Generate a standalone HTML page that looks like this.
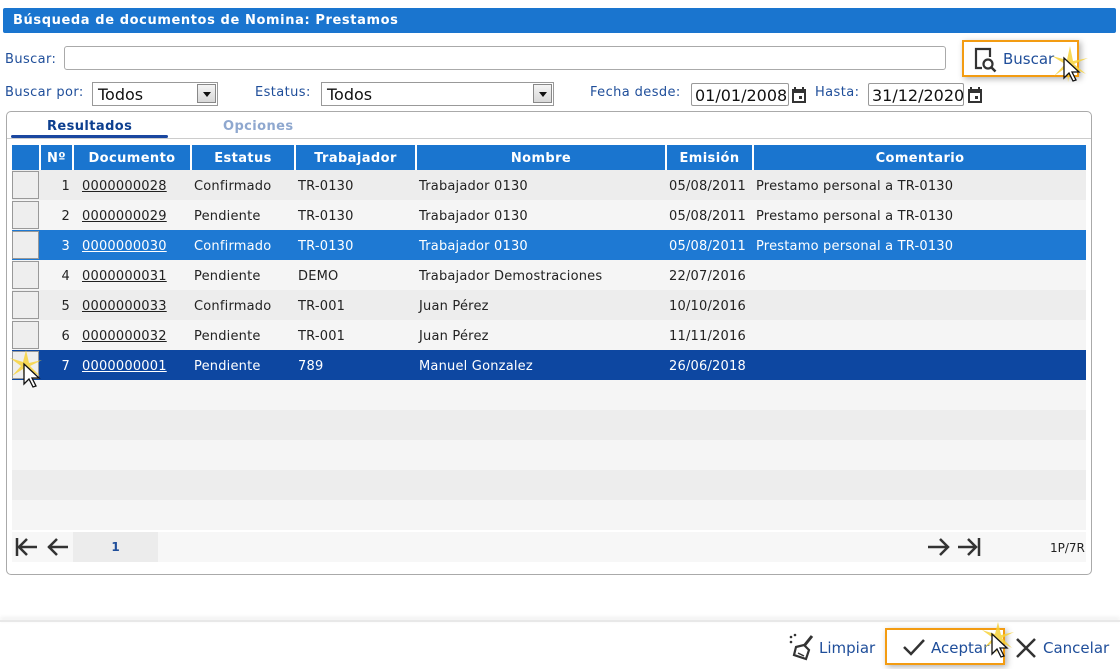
<!DOCTYPE html>
<html><head><meta charset="utf-8"><style>
*{box-sizing:border-box;margin:0;padding:0}
body{width:1120px;height:669px;background:#fff;font-family:"DejaVu Sans",Verdana,sans-serif;font-size:13px;color:#222;position:relative;overflow:hidden}
.abs{position:absolute}
.title{left:3px;top:8px;width:1113px;height:25px;background:#1a75cf;border-radius:2px;color:#fff;font-weight:bold;font-size:13px;padding:5px 10px;letter-spacing:0.6px}
.lbl{color:#1f4e9a;font-size:13px;letter-spacing:0.4px}
.inp{border:1px solid #aaa;border-radius:3px;background:#fff}
.sel{border:1px solid #999;background:#fff;font-size:16px;padding:2px 5px;color:#111}
.arr{position:absolute;right:1px;top:1px;width:19px;height:19px;background:linear-gradient(#f4f4f4,#d8d8d8);border:1px solid #888}
.arr:after{content:"";position:absolute;left:5px;top:7px;border-left:4px solid transparent;border-right:4px solid transparent;border-top:5px solid #111}
.date{border:1px solid #999;border-radius:2px;font-size:16px;padding:2px 3px;overflow:hidden;white-space:nowrap;color:#111}
table{border-collapse:collapse;position:absolute;left:12px;top:145px;width:1074px;table-layout:fixed}
th{background:#1a75cf;color:#fff;font-weight:bold;height:25px;border-right:2px solid #fff;font-size:13px;padding-top:2px;letter-spacing:0.4px}
td{height:30px;white-space:nowrap;padding:3px 3px 0;font-size:13px;letter-spacing:0.2px}
tr.a td{background:#ededed}tr.b td{background:#f5f5f5}
tr.s1 td{background:#1e79d3;color:#fff}tr.s2 td{background:#0d47a1;color:#fff}
td u{text-decoration:underline}
.cb{width:27px;height:28px;border:1px solid #999;background:#eee;margin-left:-3px;margin-top:-3px}
.btn{color:#1f4e9a;font-size:15px}
</style></head><body>
<div class="abs title">Búsqueda de documentos de Nomina: Prestamos</div>
<div class="abs lbl" style="left:5px;top:52px">Buscar:</div>
<div class="abs inp" style="left:64px;top:46px;width:882px;height:24px"></div>
<div class="abs" style="left:962px;top:40px;width:117px;height:37px;border:2px solid #f39c12;box-shadow:2px 2px 6px rgba(0,0,0,.3)"></div>
<svg class="abs" style="left:972px;top:45px" width="28" height="28" viewBox="0 0 28 28"><path d="M10 23H4V4h14v8" fill="none" stroke="#333" stroke-width="2.2"/><circle cx="16" cy="19" r="4.5" fill="none" stroke="#333" stroke-width="2.2"/><path d="M19.5 22.5l4 4" stroke="#333" stroke-width="2.5"/></svg>
<div class="abs btn" style="left:1003px;top:50px">Buscar</div>
<svg class="abs" style="left:1050px;top:44px" width="40" height="40" viewBox="0 0 40 40"><path d="M20 2L23 17 38 14 24 20 36 30 21 23 18 38 17 23 4 32 15 20 2 12 17 16Z" fill="#f7d23a" opacity=".85"/><path d="M14 14v20l5-5 4 8 3-1-4-8h7z" fill="#fff" stroke="#111" stroke-width="1.3"/></svg>
<div class="abs lbl" style="left:5px;top:85px">Buscar por:</div>
<div class="abs sel" style="left:92px;top:82px;width:126px;height:24px">Todos<div class="arr"></div></div>
<div class="abs lbl" style="left:255px;top:85px">Estatus:</div>
<div class="abs sel" style="left:321px;top:82px;width:233px;height:24px">Todos<div class="arr"></div></div>
<div class="abs lbl" style="left:590px;top:85px">Fecha desde:</div>
<div class="abs date" style="left:691px;top:83px;width:98px;height:23px">01/01/2008</div>
<svg class="abs" style="left:791px;top:86px" width="16" height="18" viewBox="0 0 16 18"><rect x="1" y="3" width="14" height="14" fill="#333"/><rect x="3" y="7" width="10" height="8" fill="#fff"/><rect x="8" y="10" width="3" height="3" fill="#333"/><rect x="3" y="1" width="2" height="3" fill="#333"/><rect x="11" y="1" width="2" height="3" fill="#333"/></svg>
<div class="abs lbl" style="left:815px;top:85px">Hasta:</div>
<div class="abs date" style="left:868px;top:83px;width:96px;height:23px">31/12/2020</div>
<svg class="abs" style="left:967px;top:86px" width="16" height="18" viewBox="0 0 16 18"><rect x="1" y="3" width="14" height="14" fill="#333"/><rect x="3" y="7" width="10" height="8" fill="#fff"/><rect x="8" y="10" width="3" height="3" fill="#333"/><rect x="3" y="1" width="2" height="3" fill="#333"/><rect x="11" y="1" width="2" height="3" fill="#333"/></svg>
<div class="abs" style="left:6px;top:111px;width:1086px;height:464px;border:1px solid #aaa;border-radius:5px"></div>
<div class="abs" style="left:7px;top:138px;width:1084px;height:1px;background:#ccc"></div>
<div class="abs" style="left:47px;top:119px;color:#0d3f8f;font-weight:bold;letter-spacing:0.4px">Resultados</div>
<div class="abs" style="left:11px;top:135px;width:157px;height:3px;background:#1a47a0;border-radius:2px"></div>
<div class="abs" style="left:223px;top:119px;color:#8fa8cf;font-weight:bold;letter-spacing:0.4px">Opciones</div>
<table>
<colgroup><col style="width:28px"><col style="width:33px"><col style="width:118px"><col style="width:104px"><col style="width:121px"><col style="width:250px"><col style="width:87px"><col></colgroup>
<tr><th></th><th>Nº</th><th>Documento</th><th>Estatus</th><th>Trabajador</th><th>Nombre</th><th>Emisión</th><th style="border-right:0">Comentario</th></tr>
<tr class="a"><td><div class="cb"></div></td><td style="text-align:right">1</td><td style="padding-left:9px"><u>0000000028</u></td><td>Confirmado</td><td>TR-0130</td><td>Trabajador 0130</td><td>05/08/2011</td><td>Prestamo personal a TR-0130</td></tr>
<tr class="b"><td><div class="cb"></div></td><td style="text-align:right">2</td><td style="padding-left:9px"><u>0000000029</u></td><td>Pendiente</td><td>TR-0130</td><td>Trabajador 0130</td><td>05/08/2011</td><td>Prestamo personal a TR-0130</td></tr>
<tr class="s1"><td><div class="cb"></div></td><td style="text-align:right">3</td><td style="padding-left:9px"><u>0000000030</u></td><td>Confirmado</td><td>TR-0130</td><td>Trabajador 0130</td><td>05/08/2011</td><td>Prestamo personal a TR-0130</td></tr>
<tr class="b"><td><div class="cb"></div></td><td style="text-align:right">4</td><td style="padding-left:9px"><u>0000000031</u></td><td>Pendiente</td><td>DEMO</td><td>Trabajador Demostraciones</td><td>22/07/2016</td><td></td></tr>
<tr class="a"><td><div class="cb"></div></td><td style="text-align:right">5</td><td style="padding-left:9px"><u>0000000033</u></td><td>Confirmado</td><td>TR-001</td><td>Juan Pérez</td><td>10/10/2016</td><td></td></tr>
<tr class="b"><td><div class="cb"></div></td><td style="text-align:right">6</td><td style="padding-left:9px"><u>0000000032</u></td><td>Pendiente</td><td>TR-001</td><td>Juan Pérez</td><td>11/11/2016</td><td></td></tr>
<tr class="s2"><td><div class="cb"></div></td><td style="text-align:right">7</td><td style="padding-left:9px"><u>0000000001</u></td><td>Pendiente</td><td>789</td><td>Manuel Gonzalez</td><td>26/06/2018</td><td></td></tr>
<tr class="b"><td colspan="8"></td></tr>
<tr class="a"><td colspan="8"></td></tr>
<tr class="b"><td colspan="8"></td></tr>
<tr class="a"><td colspan="8"></td></tr>
<tr class="b"><td colspan="8"></td></tr>
</table>
<svg class="abs" style="left:8px;top:348px" width="40" height="44" viewBox="0 0 40 44"><path d="M18 2L21 15 34 12 22 18 32 28 19 21 16 34 15 21 4 28 13 18 2 10 15 14Z" fill="#f7d23a" opacity=".85"/><path d="M16 16v20l5-5 4 8 3-1-4-8h7z" fill="#fff" stroke="#111" stroke-width="1.3"/></svg>
<div class="abs" style="left:12px;top:532px;width:1074px;height:30px;background:#f7f7f7"></div>
<div class="abs" style="left:73px;top:532px;width:85px;height:30px;background:#ececec;color:#1f4e9a;font-weight:bold;text-align:center;line-height:30px;font-size:12px">1</div>
<svg class="abs" style="left:14px;top:535px" width="58" height="24" viewBox="0 0 58 24"><g fill="none" stroke="#333" stroke-width="2.5"><path d="M3 3v18M5 12h18M13 4l-8 8 8 8M54 12H34M43 4l-8 8 8 8"/></g></svg>
<svg class="abs" style="left:926px;top:535px" width="58" height="24" viewBox="0 0 58 24"><g fill="none" stroke="#333" stroke-width="2.5"><path d="M2 12h20M14 4l8 8-8 8M32 12h18M42 4l8 8-8 8M53 3v18"/></g></svg>
<div class="abs" style="left:1050px;top:541px;font-size:12px">1P/7R</div>
<div class="abs" style="left:0;top:620px;width:1120px;height:2px;background:#e8e8e8;box-shadow:0 -2px 4px rgba(0,0,0,.12)"></div>
<svg class="abs" style="left:788px;top:633px" width="28" height="28" viewBox="0 0 28 28"><circle cx="3" cy="4" r="1.3" fill="#333"/><circle cx="7" cy="2" r="1.3" fill="#333"/><circle cx="3" cy="9" r="1.3" fill="#333"/><path d="M24 3l-8 10" stroke="#333" stroke-width="3"/><path d="M8 14l8-2 5 5-3 9-12-4z" fill="none" stroke="#333" stroke-width="2.2"/><path d="M10 20l6 3" stroke="#333" stroke-width="1.5"/></svg>
<div class="abs btn" style="left:819px;top:639px">Limpiar</div>
<div class="abs" style="left:885px;top:628px;width:120px;height:37px;border:2px solid #f39c12;box-shadow:2px 2px 6px rgba(0,0,0,.3)"></div>
<svg class="abs" style="left:902px;top:636px" width="24" height="22" viewBox="0 0 24 22"><path d="M2 11l7 7L22 4" fill="none" stroke="#333" stroke-width="2.5"/></svg>
<div class="abs btn" style="left:931px;top:639px">Aceptar</div>
<svg class="abs" style="left:978px;top:620px" width="40" height="44" viewBox="0 0 40 44"><path d="M20 2L23 15 36 12 24 18 34 28 21 21 18 34 17 21 6 28 15 18 4 10 17 14Z" fill="#f7d23a" opacity=".85"/><path d="M14 14v20l5-5 4 8 3-1-4-8h7z" fill="#fff" stroke="#111" stroke-width="1.3"/></svg>
<svg class="abs" style="left:1014px;top:636px" width="24" height="24" viewBox="0 0 24 24"><path d="M3 3l18 18M21 3L3 21" stroke="#333" stroke-width="2.5"/></svg>
<div class="abs btn" style="left:1043px;top:639px">Cancelar</div>
</body></html>
